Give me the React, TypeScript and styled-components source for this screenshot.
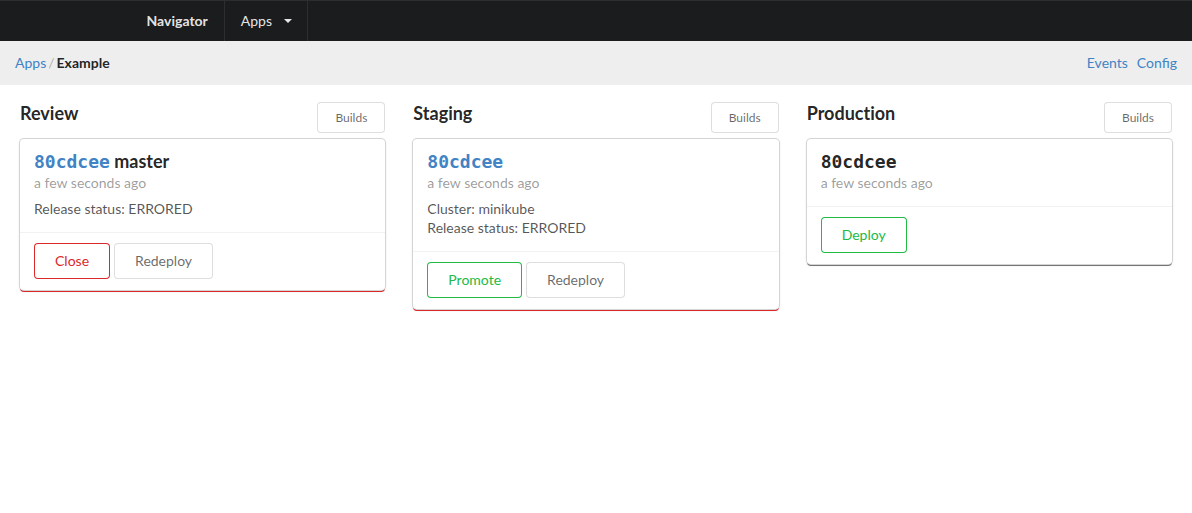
import React from 'react';
import styled, { createGlobalStyle } from 'styled-components';

const GlobalStyle = createGlobalStyle`
  *, *::before, *::after { box-sizing: border-box; }
  body {
    margin: 0;
    background: #fff;
    color: rgba(0, 0, 0, 0.87);
    font-family: Lato, 'Liberation Sans', sans-serif;
    font-size: 14px;
    line-height: 20px;
  }
`;

const TopBar = styled.nav`
  background: #1b1c1d;
  border-top: 1px solid #2d2e2f;
`;

const TopBarInner = styled.div`
  display: flex;
  max-width: 931px;
  height: 40px;
  margin: 0 auto;
`;

const Brand = styled.a`
  display: flex;
  align-items: center;
  padding: 0 16px;
  border-right: 1px solid #2d2e2f;
  color: rgba(255, 255, 255, 0.9);
  font-weight: 700;
  text-decoration: none;
`;

const MenuButton = styled.button`
  display: flex;
  align-items: center;
  gap: 12px;
  padding: 0 15px 0 16px;
  border: 0;
  border-right: 1px solid #2d2e2f;
  background: none;
  color: rgba(255, 255, 255, 0.9);
  font: inherit;
  cursor: pointer;
`;

const SubBar = styled.div`
  display: flex;
  align-items: center;
  justify-content: space-between;
  height: 44px;
  padding: 0 15px;
  background: #eee;
`;

const Breadcrumb = styled.nav`
  display: flex;
  gap: 2px;
`;

const Divider = styled.span`
  color: rgba(0, 0, 0, 0.3);
`;

const Links = styled.nav`
  display: flex;
  gap: 9px;
`;

const Link = styled.a`
  color: #4183c4;
  text-decoration: none;
`;

const Stages = styled.main`
  display: grid;
  grid-template-columns: repeat(3, 1fr);
  gap: 28px;
  align-items: start;
  padding: 17px 20px;
`;

const StageHeader = styled.header`
  display: flex;
  align-items: flex-start;
  justify-content: space-between;
  margin-bottom: 6px;
`;

const StageTitle = styled.h2`
  margin: 0;
  font-size: 18px;
  line-height: 23px;
  font-weight: 700;
  font-variant-ligatures: none;
`;

type Tone = 'positive' | 'negative' | 'neutral';

const tones: Record<Tone, { border: string; text: string }> = {
  positive: { border: '#21ba45', text: '#21ba45' },
  negative: { border: '#db2828', text: '#db2828' },
  neutral: { border: 'rgba(34, 36, 38, 0.15)', text: 'rgba(0, 0, 0, 0.6)' },
};

const Button = styled.button<{ $tone?: Tone; $small?: boolean }>`
  height: ${(p) => (p.$small ? 31 : 36)}px;
  padding: 0 ${(p) => (p.$small ? 18 : 21)}px;
  border: 0;
  border-radius: 4px;
  box-shadow: 0 0 0 1px ${(p) => tones[p.$tone ?? 'neutral'].border} inset;
  background: transparent;
  color: ${(p) => tones[p.$tone ?? 'neutral'].text};
  font-family: inherit;
  font-size: ${(p) => (p.$small ? 12 : 14)}px;
  line-height: 14px;
  cursor: pointer;
`;

const Card = styled.article<{ $accent: string }>`
  border-radius: 4px;
  background: #fff;
  box-shadow: 0 0 0 1px #d4d4d5, 0 2px 0 0 ${(p) => p.$accent}, 0 1px 3px 0 #d4d4d5;
`;

const CardBody = styled.div`
  padding: 11px 14px 14px;
`;

const CardTitle = styled.h3`
  margin: 0;
  font-size: 18px;
  line-height: 23px;
  font-weight: 700;
`;

const Hash = styled.code`
  font-family: 'DejaVu Sans Mono', monospace;
  font-size: 18px;
`;

const Meta = styled.div`
  color: rgba(0, 0, 0, 0.4);
  line-height: 19px;
`;

const Details = styled.div`
  margin-top: 7px;
  color: rgba(0, 0, 0, 0.68);
  line-height: 19px;
`;

const CardActions = styled.div`
  display: flex;
  gap: 4px;
  padding: 10px 14px 11px;
  border-top: 1px solid rgba(0, 0, 0, 0.05);
`;

interface Stage {
  name: string;
  hash: string;
  linked: boolean;
  branch?: string;
  details: string[];
  actions: { label: string; tone: Tone }[];
  accent: string;
}

const stages: Stage[] = [
  {
    name: 'Review',
    hash: '80cdcee',
    linked: true,
    branch: 'master',
    details: ['Release status: ERRORED'],
    actions: [
      { label: 'Close', tone: 'negative' },
      { label: 'Redeploy', tone: 'neutral' },
    ],
    accent: '#db2828',
  },
  {
    name: 'Staging',
    hash: '80cdcee',
    linked: true,
    details: ['Cluster: minikube', 'Release status: ERRORED'],
    actions: [
      { label: 'Promote', tone: 'positive' },
      { label: 'Redeploy', tone: 'neutral' },
    ],
    accent: '#db2828',
  },
  {
    name: 'Production',
    hash: '80cdcee',
    linked: false,
    details: [],
    actions: [{ label: 'Deploy', tone: 'positive' }],
    accent: '#767676',
  },
];

function StageColumn({ stage }: { stage: Stage }) {
  const hash = <Hash>{stage.hash}</Hash>;
  return (
    <section>
      <StageHeader>
        <StageTitle>{stage.name}</StageTitle>
        <Button $small>Builds</Button>
      </StageHeader>
      <Card $accent={stage.accent}>
        <CardBody>
          <CardTitle>
            {stage.linked ? <Link href="#release">{hash}</Link> : hash}
            {stage.branch && ` ${stage.branch}`}
          </CardTitle>
          <Meta>a few seconds ago</Meta>
          {stage.details.length > 0 && (
            <Details>
              {stage.details.map((line) => (
                <div key={line}>{line}</div>
              ))}
            </Details>
          )}
        </CardBody>
        <CardActions>
          {stage.actions.map((action) => (
            <Button key={action.label} $tone={action.tone}>
              {action.label}
            </Button>
          ))}
        </CardActions>
      </Card>
    </section>
  );
}

export default function App() {
  return (
    <>
      <GlobalStyle />
      <TopBar>
        <TopBarInner>
          <Brand href="#home">Navigator</Brand>
          <MenuButton aria-haspopup="menu">
            Apps
            <svg width="8" height="4" viewBox="0 0 8 4" aria-hidden="true">
              <path d="M0 0h8L4 4z" fill="currentColor" />
            </svg>
          </MenuButton>
        </TopBarInner>
      </TopBar>
      <SubBar>
        <Breadcrumb aria-label="Breadcrumb">
          <Link href="#apps">Apps</Link>
          <Divider>/</Divider>
          <strong>Example</strong>
        </Breadcrumb>
        <Links>
          <Link href="#events">Events</Link>
          <Link href="#config">Config</Link>
        </Links>
      </SubBar>
      <Stages>
        {stages.map((stage) => (
          <StageColumn key={stage.name} stage={stage} />
        ))}
      </Stages>
    </>
  );
}
